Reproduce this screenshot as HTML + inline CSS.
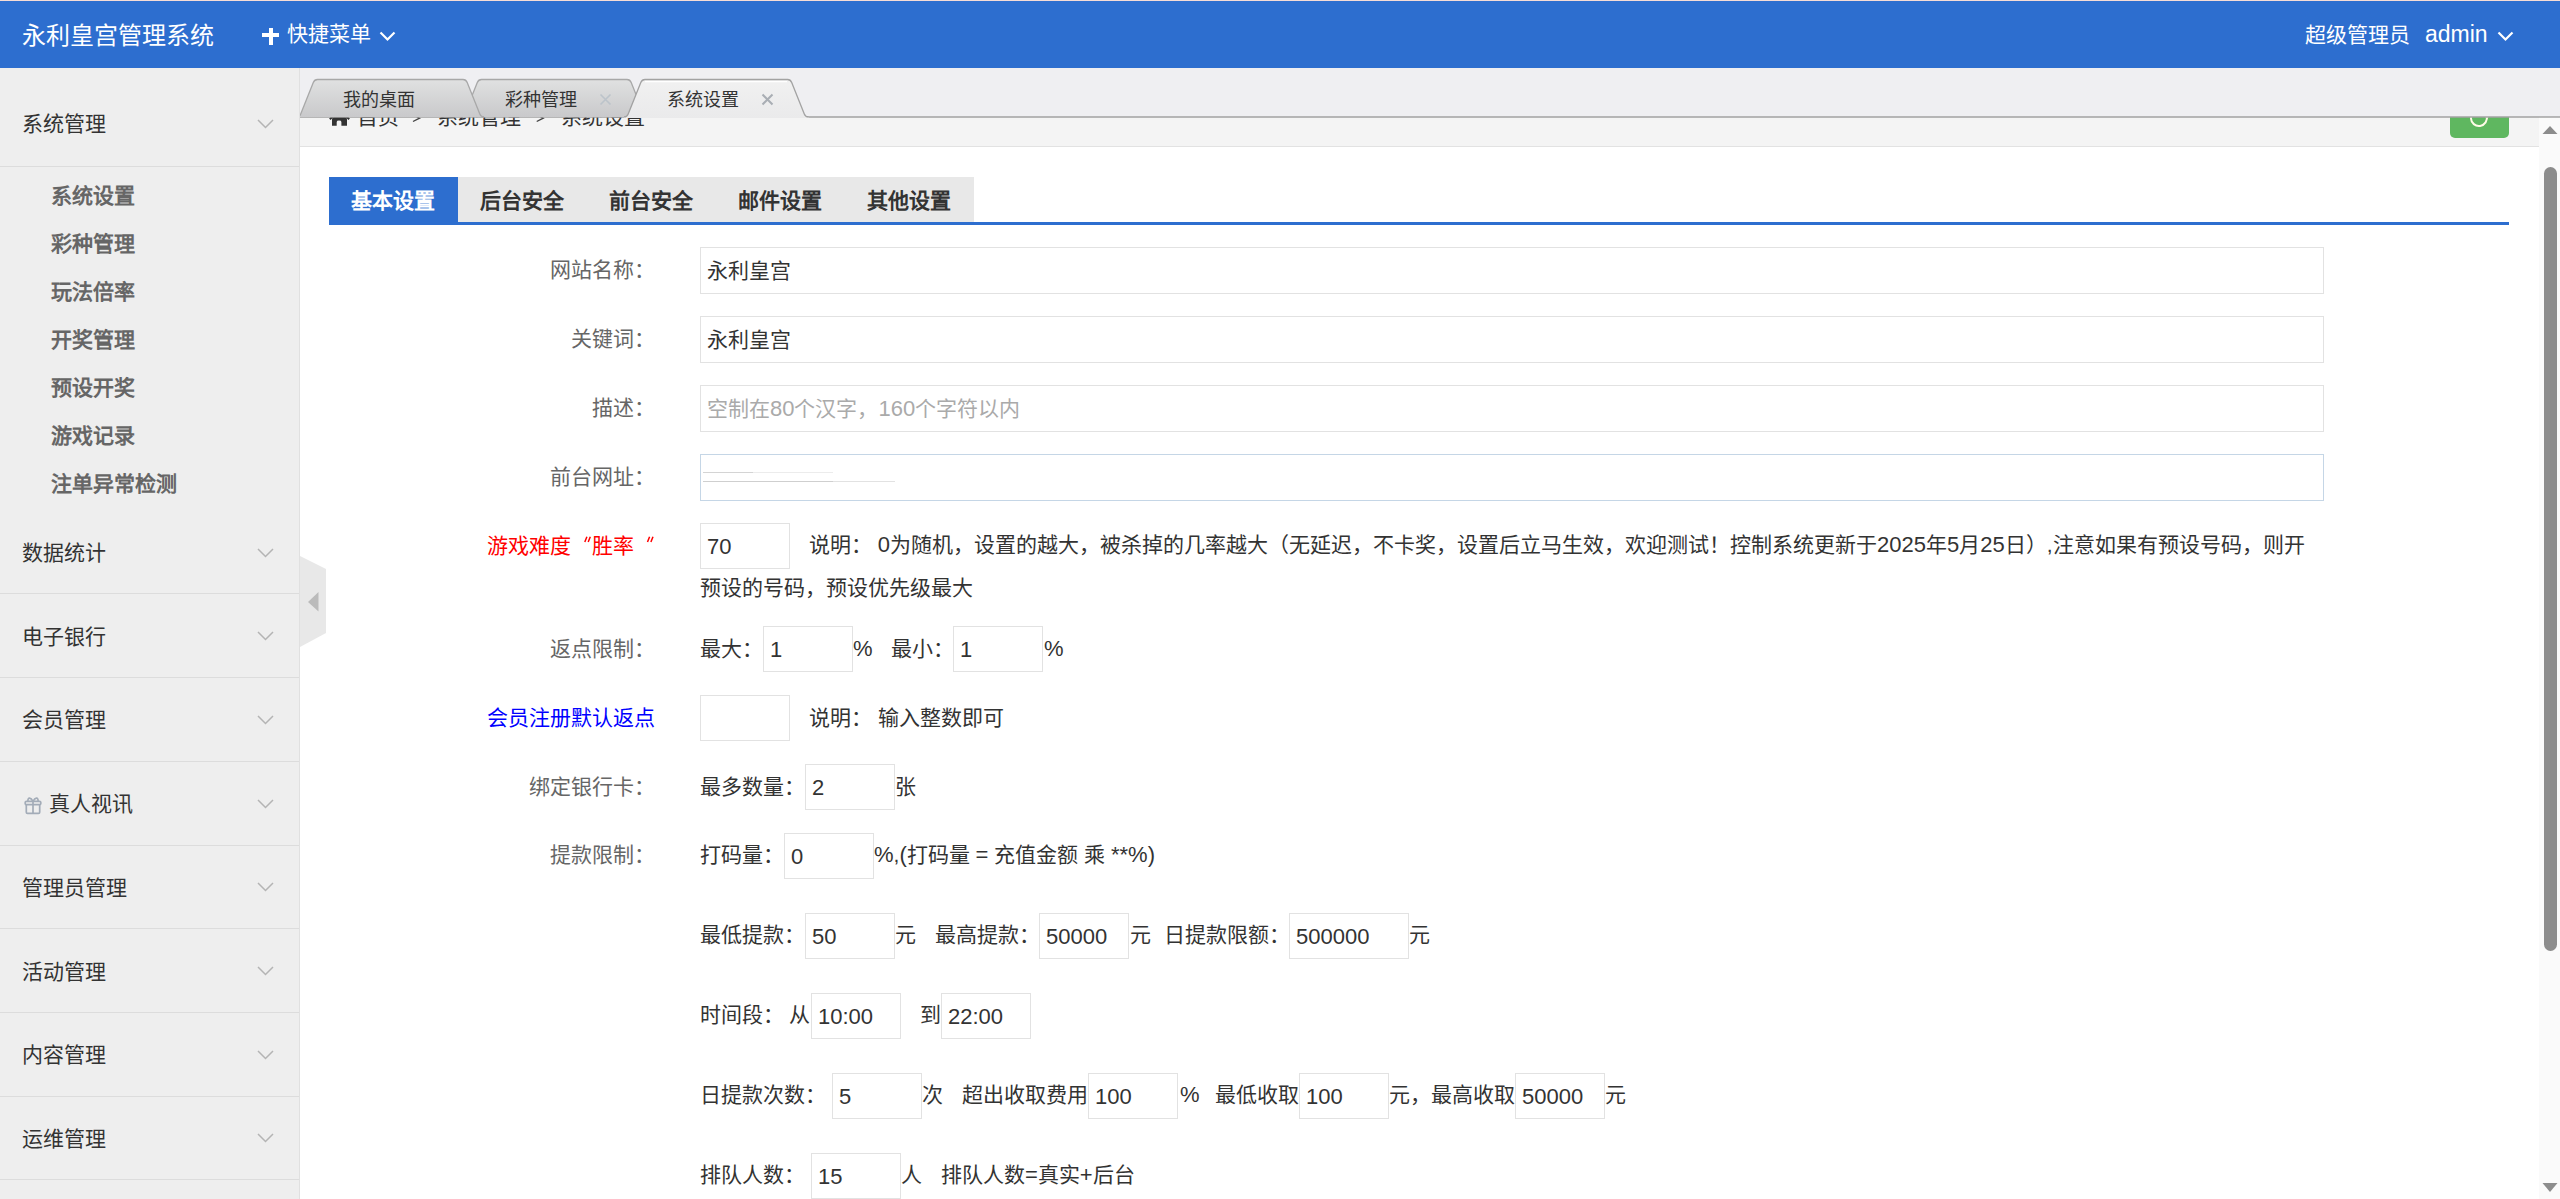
<!DOCTYPE html><html lang="zh-CN"><head><meta charset="utf-8"><title>永利皇宫管理系统</title><style>
*{box-sizing:border-box;margin:0;padding:0}
html,body{width:2560px;height:1199px;overflow:hidden;background:#fff}
body{position:relative;font-family:"Liberation Sans",sans-serif;font-size:21px;color:#333}
.a{position:absolute;white-space:nowrap}
.t{position:absolute;white-space:nowrap;height:30px;line-height:30px;font-size:21px}
.q{display:inline-block;width:21px;text-align:right}
.l{font-size:22px}
#topline{left:0;top:0;width:2560px;height:1px;background:#f6dcd6}
#header{left:0;top:1px;width:2560px;height:67px;background:#2d6ecf}
#side{left:0;top:68px;width:300px;height:1131px;background:#eeeeee;border-right:1px solid #e0e0e0}
.sep{position:absolute;left:0;width:299px;height:1px;background:#dcdcdc}
.nav{color:#333}
.sub{color:#666;font-weight:bold}
#strip{left:300px;top:68px;width:2260px;height:49px;background:#efeff2}
#frame{left:300px;top:118px;width:2239px;height:1081px;background:#fff}
#crumb{left:300px;top:117px;width:2239px;height:30px;background:#f4f4f4;border-bottom:1px solid #e2e2e2;overflow:hidden}
#sbar{left:2539px;top:118px;width:21px;height:1081px;background:#fafafa}
#thumb{left:2544px;top:167px;width:13px;height:784px;background:#8c8c8c;border-radius:7px}
#stabs{left:329px;top:177px;width:645px;height:45px;background:#e8e8e8}
#sline{left:329px;top:222px;width:2180px;height:3px;background:#2d6ecf}
#sact{left:329px;top:177px;width:129px;height:48px;background:#2d6ecf}
.st{position:absolute;white-space:nowrap;top:178px;height:45px;line-height:45px;font-size:21px;font-weight:bold;color:#333}
.lbl{position:absolute;white-space:nowrap;left:455px;width:200px;text-align:right;height:30px;line-height:30px;font-size:21px;color:#666}
.inp{position:absolute;border:1px solid #e2e2e2;background:#fff;height:46px;line-height:45px;padding-left:6px;font-size:21px;color:#333;white-space:nowrap;overflow:hidden}
.tx{color:#333}
</style></head><body>
<div class="a" id="topline"></div><div class="a" id="header"></div>
<div class="a" style="left:22px;top:1.5px;height:68px;line-height:68px;font-size:24px;color:#fff">永利皇宫管理系统</div>
<div class="a" style="left:262px;top:33px;width:17px;height:4px;background:#fff"></div><div class="a" style="left:268.5px;top:27.5px;width:4px;height:17px;background:#fff"></div>
<div class="a" style="left:287px;top:0;height:68px;line-height:68px;font-size:21px;color:#fff">快捷菜单</div>
<svg class="a" style="left:378px;top:28px" width="20" height="16"><polyline points="2.5,4.5 9.5,11.5 16.5,4.5" fill="none" stroke="#fff" stroke-width="2.2"/></svg>
<div class="a" style="left:2305px;top:1px;height:68px;line-height:68px;font-size:21px;color:#fff">超级管理员</div>
<div class="a" style="left:2425px;top:0;height:68px;line-height:68px;font-size:23px;color:#fff">admin</div>
<svg class="a" style="left:2496px;top:28px" width="20" height="16"><polyline points="2.5,4.5 9.5,11.5 16.5,4.5" fill="none" stroke="#fff" stroke-width="2.2"/></svg>
<div class="a" id="side"></div>
<div class="t nav" style="left:22px;top:109.0px">系统管理</div>
<svg class="a" style="left:256px;top:116.5px" width="20" height="14"><polyline points="2,3 9.5,10.5 17,3" fill="none" stroke="#b4b4b4" stroke-width="1.5"/></svg>
<div class="sep" style="top:165.5px"></div>
<div class="t sub" style="left:51px;top:180.5px">系统设置</div>
<div class="t sub" style="left:51px;top:228.5px">彩种管理</div>
<div class="t sub" style="left:51px;top:276.5px">玩法倍率</div>
<div class="t sub" style="left:51px;top:324.5px">开奖管理</div>
<div class="t sub" style="left:51px;top:372.5px">预设开奖</div>
<div class="t sub" style="left:51px;top:420.5px">游戏记录</div>
<div class="t sub" style="left:51px;top:468.5px">注单异常检测</div>
<div class="t nav" style="left:22px;top:538.0px">数据统计</div>
<svg class="a" style="left:256px;top:545.5px" width="20" height="14"><polyline points="2,3 9.5,10.5 17,3" fill="none" stroke="#b4b4b4" stroke-width="1.5"/></svg>
<div class="sep" style="top:593.4px"></div>
<div class="t nav" style="left:22px;top:621.7px">电子银行</div>
<svg class="a" style="left:256px;top:629.2px" width="20" height="14"><polyline points="2,3 9.5,10.5 17,3" fill="none" stroke="#b4b4b4" stroke-width="1.5"/></svg>
<div class="sep" style="top:677.1px"></div>
<div class="t nav" style="left:22px;top:705.4px">会员管理</div>
<svg class="a" style="left:256px;top:712.9px" width="20" height="14"><polyline points="2,3 9.5,10.5 17,3" fill="none" stroke="#b4b4b4" stroke-width="1.5"/></svg>
<div class="sep" style="top:760.8px"></div>
<div class="t nav" style="left:49px;top:789.1px">真人视讯</div>
<svg class="a" style="left:256px;top:796.6px" width="20" height="14"><polyline points="2,3 9.5,10.5 17,3" fill="none" stroke="#b4b4b4" stroke-width="1.5"/></svg>
<div class="sep" style="top:844.5px"></div>
<svg class="a" style="left:24px;top:794.6px" width="18" height="20" viewBox="0 0 18 20"><g fill="none" stroke="#a3acb8" stroke-width="1.7"><rect x="1.2" y="6.3" width="15.6" height="3.4" rx="1.3"/><path d="M2.3 9.7 V17.2 Q2.3 18.4 3.5 18.4 H14.5 Q15.7 18.4 15.7 17.2 V9.7"/><line x1="9" y1="6.3" x2="9" y2="18.4"/><path d="M9 6.3 C7 2.6 3.6 1.8 3.9 6.2 M9 6.3 C11 2.6 14.4 1.8 14.1 6.2"/></g></svg>
<div class="t nav" style="left:22px;top:872.8px">管理员管理</div>
<svg class="a" style="left:256px;top:880.3px" width="20" height="14"><polyline points="2,3 9.5,10.5 17,3" fill="none" stroke="#b4b4b4" stroke-width="1.5"/></svg>
<div class="sep" style="top:928.2px"></div>
<div class="t nav" style="left:22px;top:956.5px">活动管理</div>
<svg class="a" style="left:256px;top:964.0px" width="20" height="14"><polyline points="2,3 9.5,10.5 17,3" fill="none" stroke="#b4b4b4" stroke-width="1.5"/></svg>
<div class="sep" style="top:1011.9px"></div>
<div class="t nav" style="left:22px;top:1040.2px">内容管理</div>
<svg class="a" style="left:256px;top:1047.7px" width="20" height="14"><polyline points="2,3 9.5,10.5 17,3" fill="none" stroke="#b4b4b4" stroke-width="1.5"/></svg>
<div class="sep" style="top:1095.6px"></div>
<div class="t nav" style="left:22px;top:1123.9px">运维管理</div>
<svg class="a" style="left:256px;top:1131.4px" width="20" height="14"><polyline points="2,3 9.5,10.5 17,3" fill="none" stroke="#b4b4b4" stroke-width="1.5"/></svg>
<div class="sep" style="top:1179.3px"></div>
<div class="a" id="frame"></div>
<div class="a" id="crumb"></div>
<svg class="a" style="left:300px;top:100px" width="300" height="30" viewBox="300 100 300 30"><path d="M332 125.7 V119.5 Q332 117 335 116.5 L339.5 114 L344 116.5 Q347 117 347 119.5 V125.7 H341.4 V122 Q341.4 120.6 339 120.6 Q336.7 120.6 336.7 122 V125.7 Z" fill="#333"/><path d="M329.8 119.2 L339.5 110 L349.2 119.2" fill="none" stroke="#333" stroke-width="2"/></svg>
<div class="t" style="left:356.5px;top:101.5px;color:#333">首页</div>
<svg class="a" style="left:400px;top:100px" width="160" height="30" viewBox="400 100 160 30"><polyline points="413,114.5 419.5,118.2 413,121.5" fill="none" stroke="#444" stroke-width="1.4"/><polyline points="536.7,114.5 543.2,118.2 536.7,121.5" fill="none" stroke="#444" stroke-width="1.4"/></svg>
<div class="t" style="left:436.5px;top:101.5px;color:#333">系统管理</div>
<div class="t" style="left:560.5px;top:101.5px;color:#333">系统设置</div>
<div class="a" style="left:2450px;top:90px;width:59px;height:48px;background:#5fb760;border-radius:5px"></div>
<svg class="a" style="left:2465px;top:103px" width="30" height="30"><path d="M21.7 13 A8 8 0 1 1 14.5 7" fill="none" stroke="#fffbe8" stroke-width="2"/><circle cx="22" cy="14.5" r="1.2" fill="#fffbe8"/></svg>
<div class="a" id="strip"></div>
<svg class="a" style="left:300px;top:68px" width="2260" height="50"><defs><linearGradient id="gi" x1="0" y1="0" x2="0" y2="1"><stop offset="0" stop-color="#e0e1e1"/><stop offset="1" stop-color="#c9c9cb"/></linearGradient><linearGradient id="ga" x1="0" y1="0" x2="0" y2="1"><stop offset="0" stop-color="#f1f1f1"/><stop offset="1" stop-color="#eaeaeb"/></linearGradient></defs><line x1="0" y1="48.9" x2="2260" y2="48.9" stroke="#a2a2a2" stroke-width="1.5"/><path d="M160.50,48.9 Q163.50,48.9 164.70,45.90 L177.30,14.50 Q178.50,11.5 181.50,11.5 L327.00,11.5 Q330.00,11.5 331.20,14.50 L343.80,45.90 Q345.00,48.9 348.00,48.9" fill="url(#gi)" stroke="#a8a8a8" stroke-width="1.3"/><path d="M-3.50,48.9 Q-0.50,48.9 0.70,45.90 L13.30,14.50 Q14.50,11.5 17.50,11.5 L163.00,11.5 Q166.00,11.5 167.20,14.50 L179.80,45.90 Q181.00,48.9 184.00,48.9" fill="url(#gi)" stroke="#a8a8a8" stroke-width="1.3"/><path d="M324.00,48.9 Q327.00,48.9 328.20,45.90 L340.80,14.50 Q342.00,11.5 345.00,11.5 L487.50,11.5 Q490.50,11.5 491.70,14.50 L504.30,45.90 Q505.50,48.9 508.50,48.9 L 508.5,50 L 324,50 Z" fill="url(#ga)" stroke="none"/><path d="M324.00,48.9 Q327.00,48.9 328.20,45.90 L340.80,14.50 Q342.00,11.5 345.00,11.5 L487.50,11.5 Q490.50,11.5 491.70,14.50 L504.30,45.90 Q505.50,48.9 508.50,48.9" fill="none" stroke="#a2a2a2" stroke-width="1.3"/><line x1="345" y1="13.6" x2="487" y2="13.6" stroke="#fff" stroke-width="1.2"/></svg>
<div class="a" style="left:343px;top:84.5px;height:30px;line-height:30px;font-size:18px;color:#333">我的桌面</div>
<div class="a" style="left:505px;top:84.5px;height:30px;line-height:30px;font-size:18px;color:#333">彩种管理</div>
<div class="a" style="left:667px;top:84.5px;height:30px;line-height:30px;font-size:18px;color:#333">系统设置</div>
<svg class="a" style="left:598px;top:92px" width="15" height="15"><path d="M2.5 2.5 L12.5 12.5 M12.5 2.5 L2.5 12.5" stroke="#bcc3ca" stroke-width="1.6"/></svg>
<svg class="a" style="left:760px;top:92px" width="15" height="15"><path d="M2.5 2.5 L12.5 12.5 M12.5 2.5 L2.5 12.5" stroke="#a9aeb4" stroke-width="2"/></svg>
<svg class="a" style="left:300px;top:555px" width="27" height="93"><polygon points="0,1 26,14 26,78 0,92" fill="#e8e8e8"/><polygon points="8,47 18.5,37 18.5,56.5" fill="#bbbbbb"/></svg>
<div class="a" id="sbar"></div><div class="a" id="thumb"></div>
<svg class="a" style="left:2539px;top:118px" width="21" height="1081"><polygon points="3.5,16 11,8 18.5,16" fill="#8c8c8c"/><polygon points="3.5,1065 11,1074 18.5,1065" fill="#8c8c8c"/></svg>
<div class="a" id="stabs"></div><div class="a" id="sline"></div><div class="a" id="sact"></div>
<div class="st" style="left:351px;color:#fff">基本设置</div>
<div class="st" style="left:480px">后台安全</div>
<div class="st" style="left:609px">前台安全</div>
<div class="st" style="left:738px">邮件设置</div>
<div class="st" style="left:867px">其他设置</div>
<div class="lbl" style="top:254.5px">网站名称：</div>
<div class="inp" style="left:700px;top:247px;width:1624px;height:47px;">永利皇宫</div>
<div class="lbl" style="top:323.5px">关键词：</div>
<div class="inp" style="left:700px;top:316px;width:1624px;height:47px;">永利皇宫</div>
<div class="lbl" style="top:392.5px">描述：</div>
<div class="inp" style="left:700px;top:385px;width:1624px;height:47px;"><span style="color:#aaa">空制在<span class="l">80</span>个汉字，<span class="l">160</span>个字符以内</span></div>
<div class="lbl" style="top:461.5px">前台网址：</div>
<div class="inp" style="left:700px;top:454px;width:1624px;height:47px;border-color:#c5d6e6"></div>
<div class="a" style="left:703px;top:472px;width:50px;height:1px;background:#d4d4d4"></div><div class="a" style="left:753px;top:472px;width:80px;height:1px;background:#ececec"></div>
<div class="a" style="left:703px;top:481px;width:130px;height:1px;background:#cfcfcf"></div><div class="a" style="left:833px;top:481px;width:62px;height:1px;background:#e2e2e2"></div>
<div class="lbl" style="top:531.0px;color:#ff0000">游戏难度<span class="q"></span>胜率<span class="q"></span></div>
<svg class="a" style="left:580px;top:533px" width="80" height="12" viewBox="580 533 80 12"><path d="M584.8 542 L586.9 536.8 M588.2 542 L590.3 536.8 M647.5 542 L649.6 536.8 M650.9 542 L653 536.8" stroke="#ff0000" stroke-width="1.5" fill="none"/></svg>
<div class="inp" style="left:700px;top:523px;width:90px;height:46px;"><span class="l">70</span></div>
<div class="t" style="left:809px;top:530.0px;color:#333">说明：&nbsp;<span class="l">0</span>为随机，设置的越大，被杀掉的几率越大（无延迟，不卡奖，设置后立马生效，欢迎测试！控制系统更新于<span class="l">2025</span>年<span class="l">5</span>月<span class="l">25</span>日）,注意如果有预设号码，则开</div>
<div class="t" style="left:700px;top:573.0px;color:#333">预设的号码，预设优先级最大</div>
<div class="lbl" style="top:633.5px">返点限制：</div>
<div class="t" style="left:700px;top:633.5px;color:#333">最大：</div>
<div class="inp" style="left:763px;top:626px;width:90px;height:46px;"><span class="l">1</span></div>
<div class="t" style="left:853px;top:633.5px;color:#333"><span class="l">%</span></div>
<div class="t" style="left:891px;top:633.5px;color:#333">最小：</div>
<div class="inp" style="left:953px;top:626px;width:90px;height:46px;"><span class="l">1</span></div>
<div class="t" style="left:1044px;top:633.5px;color:#333"><span class="l">%</span></div>
<div class="lbl" style="top:702.5px;color:#0000ff">会员注册默认返点</div>
<div class="inp" style="left:700px;top:695px;width:90px;height:46px;"></div>
<div class="t" style="left:809px;top:702.5px;color:#333">说明：</div>
<div class="t" style="left:878px;top:702.5px;color:#333">输入整数即可</div>
<div class="lbl" style="top:771.5px">绑定银行卡：</div>
<div class="t" style="left:700px;top:771.5px;color:#333">最多数量：</div>
<div class="inp" style="left:805px;top:764px;width:90px;height:46px;"><span class="l">2</span></div>
<div class="t" style="left:895px;top:771.5px;color:#333">张</div>
<div class="lbl" style="top:840.0px">提款限制：</div>
<div class="t" style="left:700px;top:840.0px;color:#333">打码量：</div>
<div class="inp" style="left:784px;top:833px;width:90px;height:46px;"><span class="l">0</span></div>
<div class="t" style="left:874px;top:840.0px;color:#333"><span class="l">%</span>,<span class="l">(</span>打码量 <span class="l">=</span> 充值金额 乘 <span class="l">**%)</span></div>
<div class="t" style="left:700px;top:920.0px;color:#333">最低提款：</div>
<div class="inp" style="left:805px;top:913px;width:90px;height:46px;"><span class="l">50</span></div>
<div class="t" style="left:895px;top:920.0px;color:#333">元</div>
<div class="t" style="left:935px;top:920.0px;color:#333">最高提款：</div>
<div class="inp" style="left:1039px;top:913px;width:90px;height:46px;"><span class="l">50000</span></div>
<div class="t" style="left:1130px;top:920.0px;color:#333">元</div>
<div class="t" style="left:1164px;top:920.0px;color:#333">日提款限额：</div>
<div class="inp" style="left:1289px;top:913px;width:120px;height:46px;"><span class="l">500000</span></div>
<div class="t" style="left:1409px;top:920.0px;color:#333">元</div>
<div class="t" style="left:700px;top:1000.0px;color:#333">时间段：</div>
<div class="t" style="left:789px;top:1000.0px;color:#333">从</div>
<div class="inp" style="left:811px;top:993px;width:90px;height:46px;"><span class="l">10:00</span></div>
<div class="t" style="left:920px;top:1000.0px;color:#333">到</div>
<div class="inp" style="left:941px;top:993px;width:90px;height:46px;"><span class="l">22:00</span></div>
<div class="t" style="left:700px;top:1080.0px;color:#333">日提款次数：</div>
<div class="inp" style="left:832px;top:1073px;width:90px;height:46px;"><span class="l">5</span></div>
<div class="t" style="left:922px;top:1080.0px;color:#333">次</div>
<div class="t" style="left:962px;top:1080.0px;color:#333">超出收取费用</div>
<div class="inp" style="left:1088px;top:1073px;width:90px;height:46px;"><span class="l">100</span></div>
<div class="t" style="left:1180px;top:1080.0px;color:#333"><span class="l">%</span></div>
<div class="t" style="left:1215px;top:1080.0px;color:#333">最低收取</div>
<div class="inp" style="left:1299px;top:1073px;width:90px;height:46px;"><span class="l">100</span></div>
<div class="t" style="left:1389px;top:1080.0px;color:#333">元，</div>
<div class="t" style="left:1431px;top:1080.0px;color:#333">最高收取</div>
<div class="inp" style="left:1515px;top:1073px;width:90px;height:46px;"><span class="l">50000</span></div>
<div class="t" style="left:1605px;top:1080.0px;color:#333">元</div>
<div class="t" style="left:700px;top:1160.0px;color:#333">排队人数：</div>
<div class="inp" style="left:811px;top:1153px;width:90px;height:46px;"><span class="l">15</span></div>
<div class="t" style="left:901px;top:1160.0px;color:#333">人</div>
<div class="t" style="left:941px;top:1160.0px;color:#333">排队人数<span class="l">=</span>真实<span class="l">+</span>后台</div>
</body></html>
